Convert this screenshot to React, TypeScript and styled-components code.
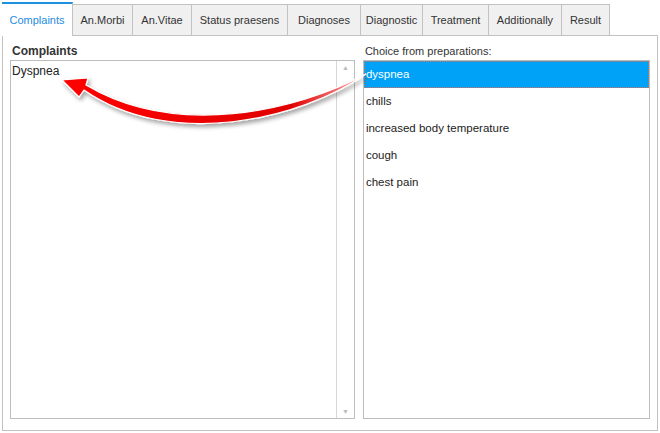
import React from "react";
import styled, { createGlobalStyle } from "styled-components";

const G = createGlobalStyle`
  body { margin:0; background:#fff; font-family:"Liberation Sans", Arial, sans-serif; font-size:11px; color:#222; }
`;
const Root = styled.div`position:relative;width:660px;height:433px;padding:2px 2px 0 2px;box-sizing:border-box;`;
const Tabs = styled.div`display:flex;height:33px;`;
const Tab = styled.div<{ $active?: boolean; $w: number }>`
  width:${p => p.$w}px;box-sizing:border-box;display:flex;align-items:center;justify-content:center;
  background:${p => (p.$active ? "#fff" : "#f0f0f0")};
  border:1px solid #c2c2c2;border-bottom:none;margin-right:-1px;
  ${p => p.$active ? "border-top:2px solid #1e90e0;border-left:none;color:#1e8ce0;height:34px;position:relative;z-index:1;" : "margin-top:2px;color:#333;"}
`;
const Panel = styled.div`border:1px solid #c2c2c2;height:396px;box-sizing:border-box;display:flex;gap:8px;padding:7px 7px 0 7px;`;
const Col = styled.div<{ $w: number }>`width:${p => p.$w}px;display:flex;flex-direction:column;`;
const Label = styled.div<{ $bold?: boolean }>`font-weight:${p => (p.$bold ? "bold" : "normal")};font-size:${p => (p.$bold ? 12 : 11)}px;height:17px;line-height:17px;color:#333;padding-left:2px;`;
const Box = styled.div<{ $col?: boolean }>`border:1px solid #bdbdbd;height:359px;box-sizing:border-box;display:flex;flex-direction:${p => (p.$col ? "column" : "row")};`;
const Text = styled.div`flex:1;padding:3px 1px;font-size:12px;`;
const Scroll = styled.div`width:17px;border-left:1px solid #d6d6d6;display:flex;flex-direction:column;justify-content:space-between;align-items:center;color:#bbb;font-size:7px;padding:3px 0;`;
const Row = styled.div<{ $sel?: boolean }>`height:27px;line-height:27px;padding-left:2px;font-size:11.5px;
  ${p => p.$sel ? "background:#00a2f7;color:#fff;outline:1px dotted #e07050;outline-offset:-1px;" : ""}`;
const Arrow = styled.svg`position:absolute;left:0;top:0;pointer-events:none;`;

const tabs: [string, number][] = [["Complaints",71],["An.Morbi",61],["An.Vitae",60],["Status praesens",97],["Diagnoses",74],["Diagnostic",63],["Treatment",67],["Additionally",74],["Result",49]];

export default function App() {
  return (
    <Root>
      <G />
      <Tabs>{tabs.map(([t, w], i) => <Tab key={t} $w={w} $active={i === 0}>{t}</Tab>)}</Tabs>
      <Panel>
        <Col $w={346}>
          <Label $bold>Complaints</Label>
          <Box><Text>Dyspnea</Text><Scroll><span>▲</span><span>▼</span></Scroll></Box>
        </Col>
        <Col $w={288}>
          <Label>Choice from preparations:</Label>
          <Box $col>
            <Row $sel>dyspnea</Row><Row>chills</Row><Row>increased body temperature</Row><Row>cough</Row><Row>chest pain</Row>
          </Box>
        </Col>
      </Panel>
      <Arrow width="660" height="433">
        <defs>
          <filter id="sh" x="-10%" y="-50%" width="120%" height="200%"><feDropShadow dx="2" dy="3" stdDeviation="2" floodColor="#000" floodOpacity="0.35"/></filter>
          <linearGradient id="gr" x1="0" x2="1"><stop offset="0" stopColor="#ff0000"/><stop offset="0.75" stopColor="#e00000"/><stop offset="1" stopColor="#ffb0b0"/></linearGradient>
        </defs>
        <g filter="url(#sh)">
          <path d="M366 74 C300 120 170 150 84 90 L79 97 L62 80 L88 78 L86 85 C175 138 295 112 366 74 Z" fill="url(#gr)" stroke="#fff" strokeWidth="1.2"/>
        </g>
      </Arrow>
    </Root>
  );
}
